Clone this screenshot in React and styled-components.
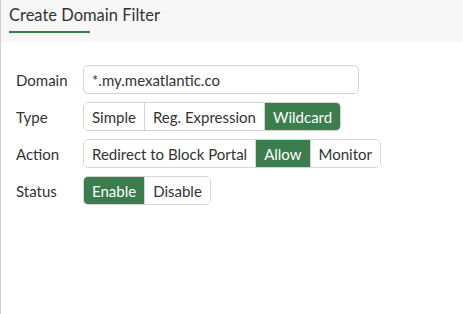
import React from "react";
import styled, { createGlobalStyle } from "styled-components";

const Global = createGlobalStyle`
  html, body { margin: 0; padding: 0; background: #fff; }
  body { font-family: Lato, "Open Sans", sans-serif; color: #333; }
`;

const Page = styled.div`
  width: 463px;
  height: 314px;
  border-left: 1px solid #cfcfcf;
  box-sizing: border-box;
  background: #fff;
`;

const Header = styled.div`
  height: 42px;
  background: #f7f7f7;
  padding-left: 8px;
  box-sizing: border-box;
`;

const Title = styled.div`
  position: relative;
  display: inline-block;
  font-size: 16.5px;
  line-height: 20px;
  padding: 5px 0 8px 0;
  color: #333;
  &::after {
    content: "";
    position: absolute;
    left: 0;
    bottom: 0;
    width: 81px;
    height: 2px;
    background: #3b7d4c;
  }
`;

const Form = styled.div`
  display: grid;
  grid-template-columns: 67px auto;
  justify-content: start;
  align-items: center;
  row-gap: 8px;
  padding: 23px 0 0 15px;
`;

const Label = styled.div`
  font-size: 15px;
  color: #333;
`;

const Input = styled.div`
  width: 276px;
  height: 29px;
  box-sizing: border-box;
  border: 1px solid #d4d4d4;
  border-radius: 5px;
  padding: 0 8px;
  display: flex;
  align-items: center;
  font-size: 15px;
  color: #333;
`;

const Group = styled.div`
  display: inline-flex;
  justify-self: start;
  border: 1px solid #d4d4d4;
  border-radius: 5px;
  overflow: hidden;
  height: 29px;
  box-sizing: border-box;
`;

const Btn = styled.div`
  display: flex;
  align-items: center;
  padding: 0 8px;
  font-size: 15px;
  background: ${(p) => (p.$active ? "#3b7d4c" : "#fff")};
  color: ${(p) => (p.$active ? "#fff" : "#333")};
  & + & {
    border-left: 1px solid #d4d4d4;
  }
`;

const Toggle = ({ options, active }) => (
  <Group>
    {options.map((o) => (
      <Btn key={o} $active={o === active}>
        {o}
      </Btn>
    ))}
  </Group>
);

export default function App() {
  return (
    <>
      <Global />
      <Page>
        <Header>
          <Title>Create Domain Filter</Title>
        </Header>
        <Form>
          <Label>Domain</Label>
          <Input>*.my.mexatlantic.co</Input>
          <Label>Type</Label>
          <Toggle options={["Simple", "Reg. Expression", "Wildcard"]} active="Wildcard" />
          <Label>Action</Label>
          <Toggle options={["Redirect to Block Portal", "Allow", "Monitor"]} active="Allow" />
          <Label>Status</Label>
          <Toggle options={["Enable", "Disable"]} active="Enable" />
        </Form>
      </Page>
    </>
  );
}
